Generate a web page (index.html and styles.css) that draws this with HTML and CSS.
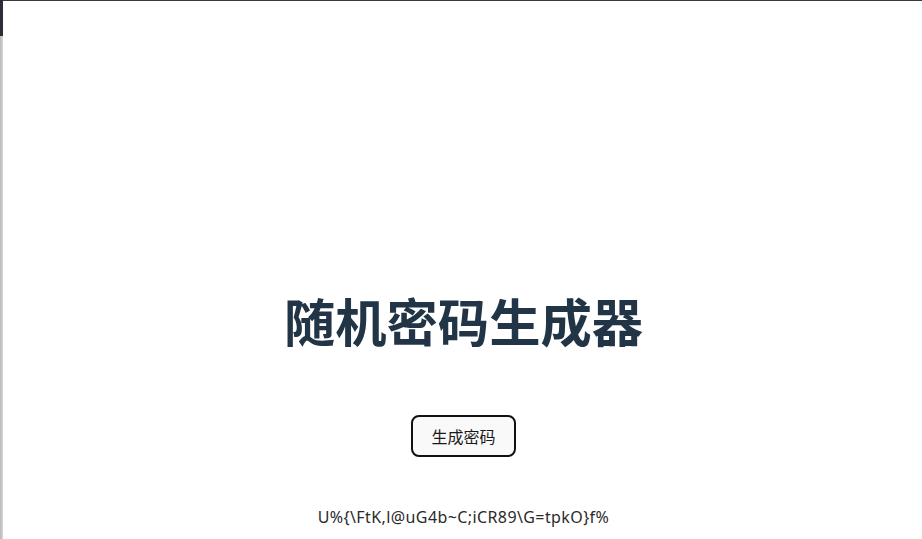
FILE: index.html
```html
<!DOCTYPE html>
<html lang="zh-CN">
<head>
<meta charset="utf-8">
<title>随机密码生成器</title>
<link rel="stylesheet" href="styles.css">
</head>
<body>
<div class="frame-edge"></div>
<main class="app">
  <h1 class="title">随机密码生成器</h1>
  <button class="gen-btn" type="button">生成密码</button>
  <p class="password">U%{\FtK,l@uG4b~C;iCR89\G=tpkO}f%</p>
</main>
</body>
</html>
```
FILE: styles.css
```css
html, body {
  margin: 0;
  padding: 0;
  height: 100%;
  background: #ffffff;
}
body {
  border-top: 1px solid #36393f;
  box-sizing: border-box;
  font-family: "Noto Sans", "Noto Sans CJK SC", sans-serif;
  color: #213547;
  overflow: hidden;
}
.frame-edge {
  position: fixed;
  left: 0;
  top: 0;
  width: 3px;
  height: 100%;
  background: linear-gradient(to right, #b8b8b8, #d8d8d8);
}
.frame-edge::before {
  content: "";
  display: block;
  width: 3px;
  height: 36px;
  background: #2b2e37;
}
.app {
  display: flex;
  flex-direction: column;
  align-items: center;
  padding-top: 281px;
  padding-left: 5px;
}
.title {
  margin: 0;
  font-family: "Noto Sans CJK SC", sans-serif;
  font-size: 51.3px;
  font-weight: 700;
  line-height: 76px;
  color: #213547;
  letter-spacing: 0;
}
.gen-btn {
  margin-top: 57px;
  width: 105px;
  height: 42px;
  box-sizing: border-box;
  border: 2px solid #111111;
  border-radius: 8px;
  background: #f9f9f9;
  font-family: "Noto Sans CJK SC", sans-serif;
  font-size: 16px;
  font-weight: 400;
  color: #1a1a1a;
  padding: 0;
}
.password {
  margin: 49px 0 0;
  font-family: "Noto Sans", "Noto Sans CJK SC", sans-serif;
  font-size: 16px;
  letter-spacing: 0.4px;
  line-height: 22px;
  color: #2a2a2a;
}
```
